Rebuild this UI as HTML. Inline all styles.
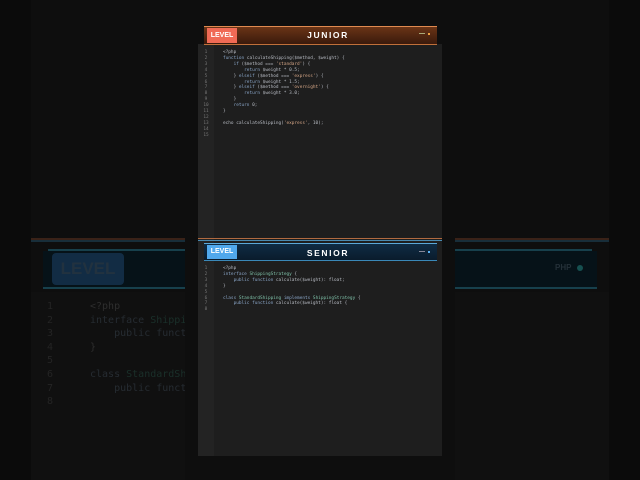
<!DOCTYPE html>
<html><head><meta charset="utf-8"><style>
*{margin:0;padding:0;box-sizing:border-box}
body{width:640px;height:480px;background:#0b0b0b;position:relative;overflow:hidden;font-family:"Liberation Sans",sans-serif}
.abs{position:absolute}
.mono{font-family:"DejaVu Sans Mono","Liberation Mono",monospace;white-space:pre}
.small{font-size:4.4px;line-height:5.9px;color:#b8bcc4}
.big{font-size:10px;line-height:13.6px;color:#2e2e2e}
.k{color:#8aa6c8}.s{color:#d8a888}.c{color:#7ec0a8}
.bk{color:#262c32}.bc{color:#1a302a}
</style></head><body>
<div class="abs" style="left:31px;top:0;width:578px;height:480px;background:#0e0e0e"></div>
<!-- left bg -->
<div class="abs" style="left:31px;top:238px;width:154px;height:2px;background:#3a2218"></div>
<div class="abs" style="left:31px;top:240px;width:154px;height:2px;background:#182e3a"></div>
<div class="abs" style="left:48px;top:249px;width:137px;height:2px;background:#17404c"></div>
<div class="abs" style="left:43px;top:251px;width:142px;height:38px;background:#061218"></div>
<div class="abs" style="left:43px;top:287px;width:142px;height:2px;background:#17404c"></div>
<div class="abs" style="left:52px;top:253px;width:72px;height:32px;background:#122c44;border-radius:4px;color:#22323f;font-weight:bold;font-size:17px;line-height:32px;text-align:center">LEVEL</div>
<div class="abs" style="left:31px;top:292px;width:154px;height:188px;background:#101010"></div>
<div class="abs mono big" style="left:40px;top:300px;width:20px;text-align:center;color:#242424">1
2
3
4
5
6
7
8</div>
<div class="abs mono big" style="left:90px;top:300px;width:95px;overflow:hidden">&lt;?php
<span class="bk">interface</span> <span class="bc">Shipping</span>
    <span class="bk">public funct</span>
}

<span class="bk">class</span> <span class="bc">StandardSh</span>
    <span class="bk">public funct</span>
</div>
<!-- right bg -->
<div class="abs" style="left:455px;top:238px;width:154px;height:2px;background:#3a2218"></div>
<div class="abs" style="left:455px;top:240px;width:154px;height:2px;background:#182e3a"></div>
<div class="abs" style="left:455px;top:249px;width:137px;height:2px;background:#17404c"></div>
<div class="abs" style="left:455px;top:251px;width:142px;height:38px;background:#061218"></div>
<div class="abs" style="left:455px;top:287px;width:142px;height:2px;background:#17404c"></div>
<div class="abs" style="left:555px;top:263px;font-size:8px;color:#243038;font-weight:bold">PHP</div>
<div class="abs" style="left:577px;top:265px;width:6px;height:6px;border-radius:50%;background:#165050"></div>
<div class="abs" style="left:455px;top:292px;width:154px;height:188px;background:#101010"></div>
<!-- center panel -->
<div class="abs" style="left:198px;top:44px;width:244px;height:412px;background:#1e1e1e"></div>
<div class="abs" style="left:198px;top:44px;width:16px;height:412px;background:#232323"></div>
<!-- junior header -->
<div class="abs" style="left:204px;top:26px;width:233px;height:19px;background:linear-gradient(#6a3416,#3a1a0c);border-top:1px solid #e08a50;border-bottom:1px solid #c0703a"></div>
<div class="abs" style="left:207px;top:28px;width:30px;height:15px;background:#f06a55;color:#fff;font-weight:bold;font-size:7px;line-height:15px;text-align:center">LEVEL</div>
<div class="abs" style="left:270px;top:30px;width:116px;text-align:center;color:#fff;font-weight:bold;font-size:8.5px;letter-spacing:1.6px">JUNIOR</div>
<div class="abs" style="left:419px;top:33px;width:6px;height:1px;background:#aa7"></div>
<div class="abs" style="left:428px;top:33px;width:2px;height:2px;background:#f0a040"></div>
<div class="abs mono small" style="left:200px;top:50px;width:12px;text-align:center;color:#777">1
2
3
4
5
6
7
8
9
10
11
12
13
14
15</div>
<div class="abs mono small" style="left:223px;top:50px">&lt;?php
<span class="k">function</span> calculateShipping($method, $weight) {
    <span class="k">if</span> ($method === <span class="s">'standard'</span>) {
        <span class="k">return</span> $weight * 0.5;
    } <span class="k">elseif</span> ($method === <span class="s">'express'</span>) {
        <span class="k">return</span> $weight * 1.5;
    } <span class="k">elseif</span> ($method === <span class="s">'overnight'</span>) {
        <span class="k">return</span> $weight * 3.0;
    }
    <span class="k">return</span> 0;
}

echo calculateShipping(<span class="s">'express'</span>, 10);
</div>
<!-- separator -->
<div class="abs" style="left:198px;top:238px;width:244px;height:1px;background:#b06a40"></div>
<div class="abs" style="left:198px;top:240px;width:244px;height:1px;background:#4a8ab0"></div>
<!-- senior header -->
<div class="abs" style="left:204px;top:243px;width:233px;height:18px;background:linear-gradient(#0f2c44,#0a1c2c);border-top:1px solid #5aa8d8;border-bottom:1px solid #3a88b8"></div>
<div class="abs" style="left:207px;top:245px;width:30px;height:14px;background:#50a8ec;color:#fff;font-weight:bold;font-size:7px;line-height:14px;text-align:center">LEVEL</div>
<div class="abs" style="left:270px;top:248px;width:116px;text-align:center;color:#fff;font-weight:bold;font-size:8.5px;letter-spacing:1.6px">SENIOR</div>
<div class="abs" style="left:419px;top:251px;width:6px;height:1px;background:#889"></div>
<div class="abs" style="left:428px;top:251px;width:2px;height:2px;background:#5ab0f0"></div>
<div class="abs mono small" style="left:200px;top:266px;width:12px;text-align:center;color:#777">1
2
3
4
5
6
7
8</div>
<div class="abs mono small" style="left:223px;top:266px">&lt;?php
<span class="k">interface</span> <span class="c">ShippingStrategy</span> {
    <span class="k">public function</span> calculate($weight): float;
}

<span class="k">class</span> <span class="c">StandardShipping</span> <span class="k">implements</span> <span class="c">ShippingStrategy</span> {
    <span class="k">public function</span> calculate($weight): float {
</div>
</body></html>
